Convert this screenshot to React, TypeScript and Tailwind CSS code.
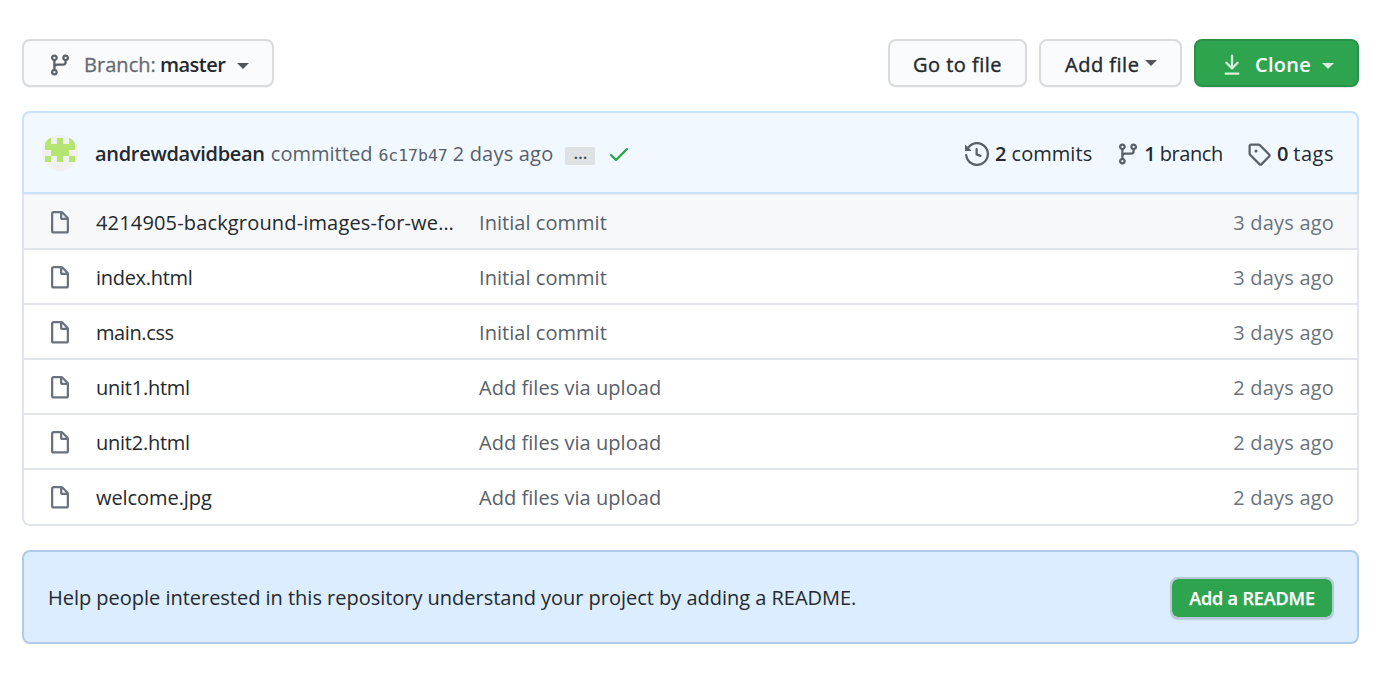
import type { ReactNode } from 'react';

const paths = {
  branch:
    'M11.75 2.5a.75.75 0 100 1.5.75.75 0 000-1.5zm-2.25.75a2.25 2.25 0 113 2.122V6A2.5 2.5 0 0110 8.5H6a1 1 0 00-1 1v1.128a2.251 2.251 0 11-1.5 0V5.372a2.25 2.25 0 111.5 0v1.836A2.492 2.492 0 016 7h4a1 1 0 001-1v-.628A2.25 2.25 0 019.5 3.25zM4.25 12a.75.75 0 100 1.5.75.75 0 000-1.5zM3.5 3.25a.75.75 0 111.5 0 .75.75 0 01-1.5 0z',
  history:
    'M1.643 3.143L.427 1.927A.25.25 0 000 2.104V5.75c0 .138.112.25.25.25h3.646a.25.25 0 00.177-.427L2.715 4.215a6.5 6.5 0 11-1.18 4.458.75.75 0 10-1.493.154 8.001 8.001 0 101.6-5.684zM7.75 4a.75.75 0 01.75.75v2.992l2.028.812a.75.75 0 01-.557 1.392l-2.5-1A.75.75 0 017 8.25v-3.5A.75.75 0 017.75 4z',
  tag: 'M2.5 7.775V2.75a.25.25 0 01.25-.25h5.025a.25.25 0 01.177.073l6.25 6.25a.25.25 0 010 .354l-5.025 5.025a.25.25 0 01-.354 0l-6.25-6.25a.25.25 0 01-.073-.177zm-1.5 0V2.75C1 1.784 1.784 1 2.75 1h5.025c.464 0 .91.184 1.238.513l6.25 6.25a1.75 1.75 0 010 2.474l-5.026 5.026a1.75 1.75 0 01-2.474 0l-6.25-6.25A1.75 1.75 0 011 7.775zM6 5a1 1 0 100 2 1 1 0 000-2z',
  file: 'M3.75 1.5a.25.25 0 00-.25.25v11.5c0 .138.112.25.25.25h8.5a.25.25 0 00.25-.25V6H9.75A1.75 1.75 0 018 4.25V1.5H3.75zm5.75.56v2.19c0 .138.112.25.25.25h2.19L9.5 2.06zM2 1.75C2 .784 2.784 0 3.75 0h5.086c.464 0 .909.184 1.237.513l3.414 3.414c.329.328.513.773.513 1.237v8.086A1.75 1.75 0 0112.25 15h-8.5A1.75 1.75 0 012 13.25V1.75z',
  check:
    'M13.78 4.22a.75.75 0 010 1.06l-7.25 7.25a.75.75 0 01-1.06 0L2.22 9.28a.75.75 0 011.06-1.06L6 10.94l6.72-6.72a.75.75 0 011.06 0z',
  download:
    'M7.47 10.78a.75.75 0 001.06 0l3.75-3.75a.75.75 0 00-1.06-1.06L8.75 8.44V1.75a.75.75 0 00-1.5 0v6.69L4.78 5.97a.75.75 0 00-1.06 1.06l3.75 3.75zM3.75 13a.75.75 0 000 1.5h8.5a.75.75 0 000-1.5h-8.5z',
};

function Icon({ name, className }: { name: keyof typeof paths; className: string }) {
  return (
    <svg viewBox="0 0 16 16" width="24" height="24" fill="currentColor" className={`shrink-0 ${className}`}>
      <path fillRule="evenodd" d={paths[name]} />
    </svg>
  );
}

function Caret({ className }: { className: string }) {
  return (
    <svg viewBox="0 0 12 6" width="12" height="6" fill="currentColor" className={`shrink-0 ${className}`}>
      <path d="M0 0h12L6 6z" />
    </svg>
  );
}

function Button({ className, children }: { className: string; children: ReactNode }) {
  return (
    <button
      className={`flex h-12 shrink-0 items-center rounded-[8px] border-2 border-[#d9dbdd] bg-[#fafbfc] pt-[3px] text-[#24292e] shadow-[0_1px_1px_rgba(27,31,35,0.05)] ${className}`}
    >
      {children}
    </button>
  );
}

function Avatar() {
  return (
    <svg viewBox="0 0 36 36" width="36" height="36" className="mb-px shrink-0">
      <clipPath id="avatar">
        <circle cx="18" cy="18" r="18" />
      </clipPath>
      <g clipPath="url(#avatar)" shapeRendering="crispEdges">
        <rect width="36" height="36" fill="#f0f0f0" />
        <path fill="#b5e571" d="M3 3h6v6h6V3h6v6h6V3h6v12h-6v6h-6v6h-6v-6H9v-6H3zM3 21h6v6H3zM27 21h6v6h-6z" />
      </g>
    </svg>
  );
}

const files = [
  { name: '4214905-background-images-for-we…', message: 'Initial commit', age: '3 days ago', tracking: 'tracking-[0.16px]' },
  { name: 'index.html', message: 'Initial commit', age: '3 days ago', tracking: 'tracking-[-0.3px]' },
  { name: 'main.css', message: 'Initial commit', age: '3 days ago', tracking: 'tracking-[-0.4px]' },
  { name: 'unit1.html', message: 'Add files via upload', age: '2 days ago', tracking: 'tracking-[-0.25px]' },
  { name: 'unit2.html', message: 'Add files via upload', age: '2 days ago', tracking: 'tracking-[-0.25px]' },
  { name: 'welcome.jpg', message: 'Add files via upload', age: '2 days ago', tracking: 'tracking-[-0.067px]' },
];

export default function App() {
  return (
    <main className="min-h-[682px] w-[1381px] bg-white px-[22px] pt-[39px] font-['Open_Sans','Noto_Sans',sans-serif] text-[20px] leading-[30px] whitespace-nowrap text-[#24292e]">
      <div className="flex gap-3">
        <Button className="mr-auto w-[252px] pl-[24px]">
          <Icon name="branch" className="text-[#586069]" />
          <span className="ml-[12px] tracking-[0.05px] text-[#666a6e] [-webkit-text-stroke:0.3px]">Branch:</span>
          <span className="ml-[4px] font-semibold tracking-[-0.5px]">master</span>
          <Caret className="mt-[3px] ml-[12px] text-[#50555a]" />
        </Button>
        <Button className="w-[139px] justify-center">
          <span className="tracking-[0.5px] [-webkit-text-stroke:0.4px]">Go to file</span>
        </Button>
        <Button className="w-[143px] pl-[24px]">
          <span className="tracking-[0.5px] [-webkit-text-stroke:0.4px]">Add file</span>
          <Caret className="mb-[4px] ml-[6px] text-[#50555a]" />
        </Button>
        <button className="flex h-12 w-[165px] items-center rounded-[8px] border-2 border-[#2a9147] bg-[#2ea44f] pt-[3px] pl-[24px] text-white shadow-[0_1px_1px_rgba(27,31,35,0.1)]">
          <Icon name="download" className="text-[#d5edda]" />
          <span className="ml-[11px] font-semibold tracking-[0.3px]">Clone</span>
          <Caret className="mt-[3px] ml-[11px] text-[#d5edda]" />
        </button>
      </div>

      <section className="mt-6">
        <header className="flex h-[83px] items-center rounded-t-[8px] border-2 border-[#c8e1ff] bg-[#f1f8ff] pt-[2px] pr-[23px] pl-[18px]">
          <Avatar />
          <span className="ml-[17px] font-semibold tracking-[-0.3px]">andrewdavidbean</span>
          <span className="ml-[6px] tracking-[0.03px] text-[#586069]">committed</span>
          <span className="mt-[4px] ml-[6px] font-['DejaVu_Sans_Mono',monospace] text-[16.5px] tracking-[-0.05px] text-[#586069]">
            6c17b47
          </span>
          <span className="ml-[5px] tracking-[0.2px] text-[#586069]">2 days ago</span>
          <span className="mt-[4px] ml-[12px] flex h-[18px] w-[30px] items-center justify-center rounded-[1px] bg-[#dfe2e5] pb-[6px] text-[17px] leading-none font-semibold text-[#444d56]">
            …
          </span>
          <Icon name="check" className="ml-[12px] text-[#28a745]" />
          <div className="ml-auto flex items-center">
            <Icon name="history" className="text-[#586069]" />
            <span className="ml-[6px] font-semibold">2</span>
            <span className="ml-[5px] tracking-[0.05px]">commits</span>
            <Icon name="branch" className="ml-[24px] text-[#586069]" />
            <span className="ml-[4px] font-semibold">1</span>
            <span className="ml-[4px] tracking-[-0.4px]">branch</span>
            <Icon name="tag" className="ml-[24px] text-[#586069]" />
            <span className="ml-[6px] font-semibold">0</span>
            <span className="ml-[5px] tracking-[0.5px]">tags</span>
          </div>
        </header>
        <ul className="rounded-b-[8px] border-2 border-t-0 border-[#e1e4e8]">
          {files.map((f, i) => (
            <li
              key={f.name}
              className={`flex items-center pr-[23px] pl-[24px] ${
                i === 0
                  ? 'h-[54px] border-t border-[#eaecef] bg-[#f6f8fa] pt-[2px]'
                  : i === files.length - 1
                    ? 'h-[56px] border-t-2 border-[#e1e4e8] pt-px'
                    : 'h-[55px] border-t-2 border-[#e1e4e8] pt-[2px]'
              }`}
            >
              <Icon name="file" className="text-[#6a737d]" />
              <span className={`ml-[24px] w-[383px] ${f.tracking}`}>{f.name}</span>
              <span className="tracking-[0.04px] text-[#586069]">{f.message}</span>
              <span className="ml-auto tracking-[0.2px] text-[#6a737d]">{f.age}</span>
            </li>
          ))}
        </ul>
      </section>

      <section className="mt-6 flex h-[94px] items-center justify-between rounded-[8px] border-2 border-[#afcbe9] bg-[#dbedff] pr-[23px] pl-[24px]">
        <p className="mt-[2px] tracking-[-0.022px]">
          Help people interested in this repository understand your project by adding a README.
        </p>
        <button className="mt-[2px] flex h-[42px] w-[164px] items-center justify-center rounded-[8px] border-2 border-[#b6c7d9] bg-[#2ea44f] bg-clip-padding text-[18px] font-semibold tracking-[-0.14px] text-white shadow-[0_1px_1px_rgba(27,31,35,0.15)] [-webkit-text-stroke:0.25px]">
          Add a README
        </button>
      </section>
    </main>
  );
}
